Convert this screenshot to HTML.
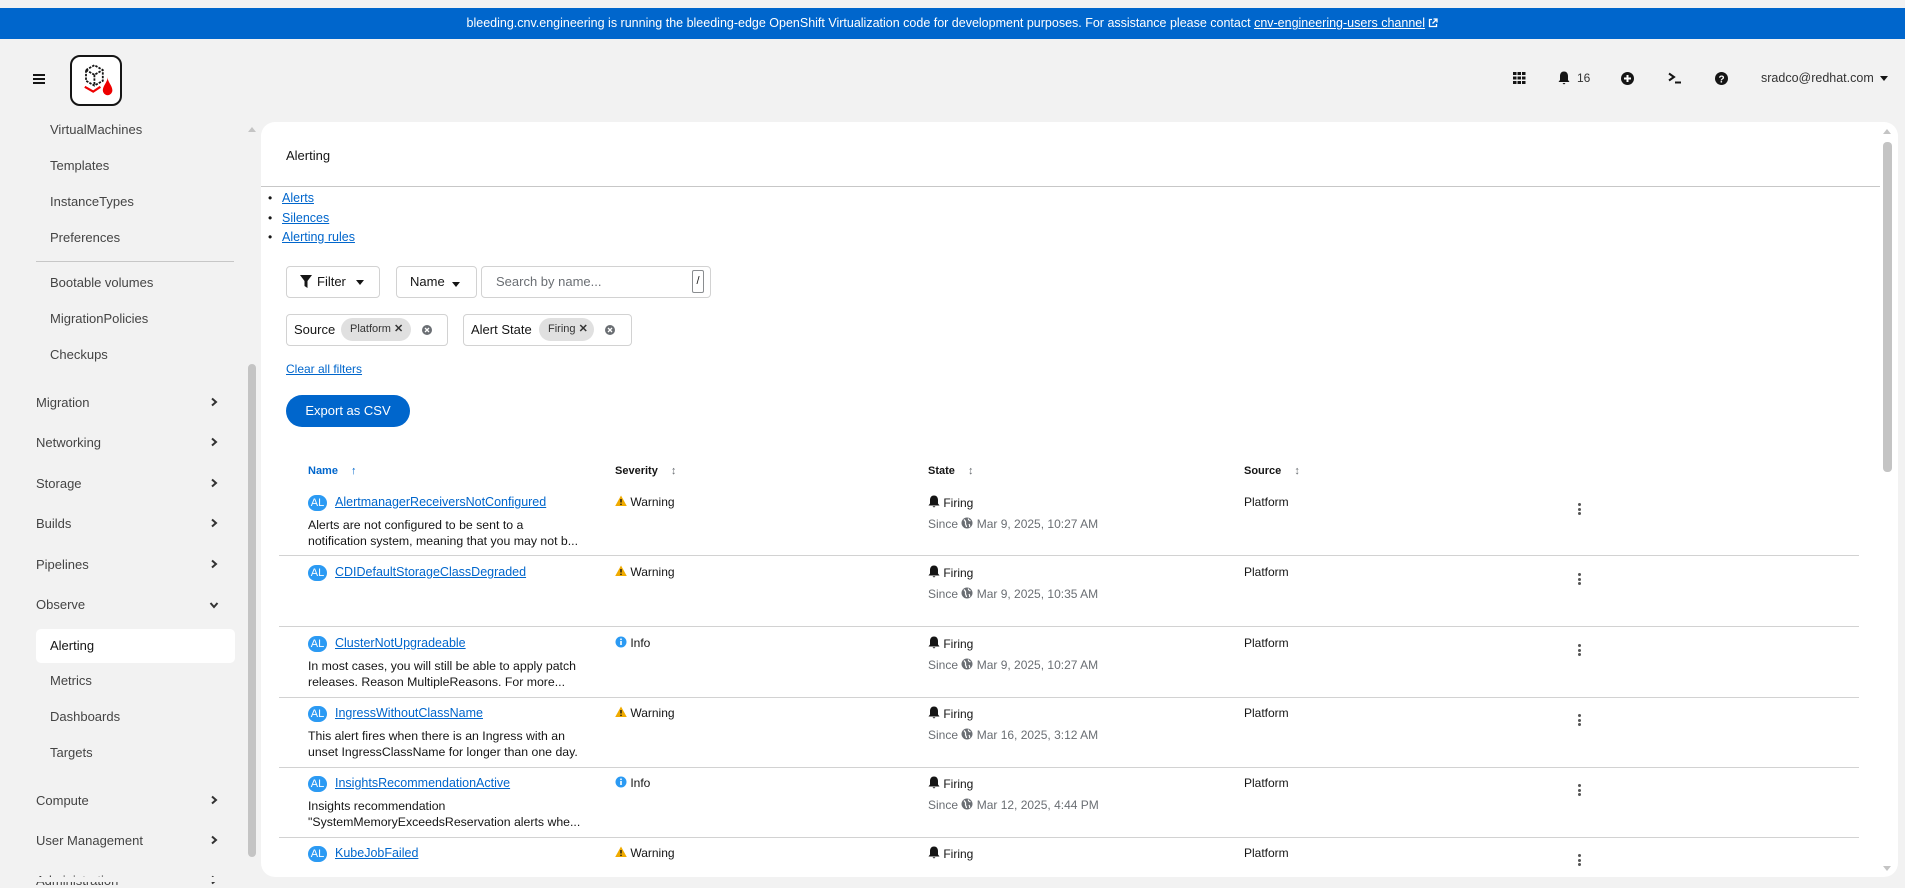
<!DOCTYPE html>
<html><head><meta charset="utf-8"><style>
*{box-sizing:border-box;margin:0;padding:0}
body{width:1905px;height:882px;overflow:hidden;background:#f2f2f2;font-family:"Liberation Sans",sans-serif;color:#151515;position:relative}
.a{position:absolute;white-space:nowrap}
.banner{left:0;top:8px;width:1905px;height:31px;background:#0066cc;color:#fff;font-size:12.5px;text-align:center;line-height:31px}
.banner u{color:#fff}
.side{font-size:13px;color:#444}
.sub{left:50px}
.main{left:36px}
.chev{left:210px}
.card{left:261px;top:122px;width:1637px;height:755px;background:#fff;border-radius:14px}
a{color:#0066cc;text-decoration:underline}
.box{border:1px solid #d2d2d2;border-radius:4px;background:#fff}
.btnt{font-size:13px;color:#151515}
.chip{background:#e0e0e0;border-radius:12px;font-size:11px;color:#333;line-height:23px;padding-left:9px}
.th{font-size:11px;font-weight:bold;color:#151515}
.sep{left:279px;width:1580px;height:1px;background:#d2d2d2}
.badge{width:19px;height:16px;border-radius:8px;background:#2b9af3;color:#fff;font-size:11px;line-height:16px;text-align:center}
.nm{font-size:12.5px;color:#0066cc;text-decoration:underline}
.desc{font-size:12.3px;color:#151515;line-height:16px}
.cell{font-size:12px}
.since{font-size:12px;color:#6a6e73}
.keb{width:3px}
.keb i{display:block;width:3px;height:3px;border-radius:2px;background:#555;margin-bottom:1.5px}
svg{vertical-align:-1px}
</style></head><body>
<div class="a banner">bleeding.cnv.engineering is running the bleeding-edge OpenShift Virtualization code for development purposes. For assistance please contact <u>cnv-engineering-users channel</u> <svg width="10" height="10" viewBox="0 0 10 10"><path d="M4 1.5H1.5V8.5H8.5V6M5.5 1H9V4.5M9 1L4.5 5.5" fill="none" stroke="#fff" stroke-width="1.3"/></svg></div>

<div class="a" style="left:33px;top:74px;width:12px;height:2px;background:#151515;box-shadow:0 4px 0 #151515,0 8px 0 #151515"></div>
<div class="a" style="left:70px;top:55px;width:52px;height:51px;border:2px solid #151515;border-radius:10px;background:#fff"></div>
<svg class="a" style="left:80px;top:64px" width="36" height="36" viewBox="0 0 30 30"><path d="M5 5 L12 1 L19 5 L19 14 L12 18 L5 14 Z M5 5 L12 9 L19 5 M12 9 L12 18" fill="none" stroke="#151515" stroke-width="1.5" stroke-dasharray="2 1"/><path d="M4 19 L11 23 L17 19" fill="none" stroke="#e00" stroke-width="1.8"/><path d="M23 11 C23 15 27 18 27 22 A4 4 0 0 1 19 22 C19 18 23 15 23 11Z" fill="#e00"/></svg>

<!-- top right icons -->
<svg class="a" style="left:1513px;top:72px" width="13" height="12"><g fill="#151515"><rect x="0" y="0" width="3.5" height="3"/><rect x="4.5" y="0" width="3.5" height="3"/><rect x="9" y="0" width="3.5" height="3"/><rect x="0" y="4.5" width="3.5" height="3"/><rect x="4.5" y="4.5" width="3.5" height="3"/><rect x="9" y="4.5" width="3.5" height="3"/><rect x="0" y="9" width="3.5" height="3"/><rect x="4.5" y="9" width="3.5" height="3"/><rect x="9" y="9" width="3.5" height="3"/></g></svg>
<svg class="a" style="left:1558px;top:71px" width="12" height="14" viewBox="0 0 12 14"><path d="M6 0.5 C3 0.5 2 3 2 5 L2 9 L0.5 11 L11.5 11 L10 9 L10 5 C10 3 9 0.5 6 0.5Z M4.5 12 L7.5 12 L6 13.5Z" fill="#151515"/></svg>
<div class="a" style="left:1577px;top:71px;font-size:12px;color:#333">16</div>
<svg class="a" style="left:1621px;top:72px" width="13" height="13"><circle cx="6.5" cy="6.5" r="6.5" fill="#151515"/><path d="M6.5 3v7M3 6.5h7" stroke="#fff" stroke-width="2"/></svg>
<svg class="a" style="left:1668px;top:72px" width="14" height="12"><path d="M1 1.5L6 5L1 8.5" fill="none" stroke="#151515" stroke-width="2"/><path d="M7 10.5H13" stroke="#151515" stroke-width="2"/></svg>
<svg class="a" style="left:1715px;top:72px" width="13" height="13"><circle cx="6.5" cy="6.5" r="6.5" fill="#151515"/><text x="6.5" y="10.5" font-size="10" font-weight="bold" fill="#fff" text-anchor="middle" font-family="Liberation Sans">?</text></svg>
<div class="a" style="left:1761px;top:71px;font-size:12.5px;color:#333">sradco@redhat.com</div>
<div class="a" style="left:1880px;top:76px;border-left:4px solid transparent;border-right:4px solid transparent;border-top:5px solid #151515"></div>

<!-- sidebar -->
<div class="a side sub" style="top:122px">VirtualMachines</div>
<div class="a side sub" style="top:158px">Templates</div>
<div class="a side sub" style="top:194px">InstanceTypes</div>
<div class="a side sub" style="top:230px">Preferences</div>
<div class="a" style="left:36px;top:261px;width:198px;height:1px;background:#c7c7c7"></div>
<div class="a side sub" style="top:275px">Bootable volumes</div>
<div class="a side sub" style="top:311px">MigrationPolicies</div>
<div class="a side sub" style="top:347px">Checkups</div>
<div class="a side main" style="top:395px">Migration</div><svg class="a chev" style="top:397px" width="8" height="10"><path d="M2 1.5L6 5L2 8.5" fill="none" stroke="#333" stroke-width="2"/></svg>
<div class="a side main" style="top:435px">Networking</div><svg class="a chev" style="top:437px" width="8" height="10"><path d="M2 1.5L6 5L2 8.5" fill="none" stroke="#333" stroke-width="2"/></svg>
<div class="a side main" style="top:476px">Storage</div><svg class="a chev" style="top:478px" width="8" height="10"><path d="M2 1.5L6 5L2 8.5" fill="none" stroke="#333" stroke-width="2"/></svg>
<div class="a side main" style="top:516px">Builds</div><svg class="a chev" style="top:518px" width="8" height="10"><path d="M2 1.5L6 5L2 8.5" fill="none" stroke="#333" stroke-width="2"/></svg>
<div class="a side main" style="top:557px">Pipelines</div><svg class="a chev" style="top:559px" width="8" height="10"><path d="M2 1.5L6 5L2 8.5" fill="none" stroke="#333" stroke-width="2"/></svg>
<div class="a side main" style="top:597px">Observe</div><svg class="a" style="left:209px;top:601px" width="10" height="8"><path d="M1.5 2L5 6L8.5 2" fill="none" stroke="#333" stroke-width="2"/></svg>
<div class="a" style="left:36px;top:629px;width:199px;height:34px;background:#fff;border-radius:5px"></div>
<div class="a side" style="left:50px;top:638px;color:#151515">Alerting</div>
<div class="a side sub" style="top:673px">Metrics</div>
<div class="a side sub" style="top:709px">Dashboards</div>
<div class="a side sub" style="top:745px">Targets</div>
<div class="a side main" style="top:793px">Compute</div><svg class="a chev" style="top:795px" width="8" height="10"><path d="M2 1.5L6 5L2 8.5" fill="none" stroke="#333" stroke-width="2"/></svg>
<div class="a side main" style="top:833px">User Management</div><svg class="a chev" style="top:835px" width="8" height="10"><path d="M2 1.5L6 5L2 8.5" fill="none" stroke="#333" stroke-width="2"/></svg>
<div class="a side main" style="top:873px">Administration</div><svg class="a chev" style="top:875px" width="8" height="10"><path d="M2 1.5L6 5L2 8.5" fill="none" stroke="#333" stroke-width="2"/></svg>
<div class="a" style="left:248px;top:364px;width:8px;height:493px;background:#c4c4c4;border-radius:4px"></div>
<div class="a" style="left:248px;top:127px;border-left:4px solid transparent;border-right:4px solid transparent;border-bottom:5px solid #c4c4c4"></div>

<!-- card -->
<div class="a card"></div>
<div class="a" style="left:1883px;top:142px;width:9px;height:330px;background:#c4c4c4;border-radius:4px"></div>
<div class="a" style="left:1883px;top:129px;border-left:4px solid transparent;border-right:4px solid transparent;border-bottom:5px solid #c4c4c4"></div>
<div class="a" style="left:1883px;top:866px;border-left:4px solid transparent;border-right:4px solid transparent;border-top:5px solid #c4c4c4"></div>
<div class="a" style="left:286px;top:148px;font-size:13px">Alerting</div>
<div class="a" style="left:261px;top:186px;width:1619px;height:1px;background:#c7c7c7"></div>
<div class="a" style="left:268px;top:189px;font-size:12px;line-height:19.5px">•<br>•<br>•</div>
<div class="a" style="left:282px;top:189px;font-size:12.5px;line-height:19.5px"><a>Alerts</a><br><a>Silences</a><br><a>Alerting rules</a></div>

<div class="a box" style="left:286px;top:266px;width:94px;height:32px"></div>
<svg class="a" style="left:300px;top:275px" width="12" height="13"><path d="M0 0H12L7.5 6V13L4.5 11V6Z" fill="#151515"/></svg>
<div class="a btnt" style="left:317px;top:274px">Filter</div>
<div class="a" style="left:356px;top:280px;border-left:4px solid transparent;border-right:4px solid transparent;border-top:5px solid #151515"></div>
<div class="a box" style="left:396px;top:266px;width:81px;height:32px"></div>
<div class="a btnt" style="left:410px;top:274px">Name</div>
<div class="a" style="left:452px;top:282px;border-left:4px solid transparent;border-right:4px solid transparent;border-top:5px solid #151515"></div>
<div class="a box" style="left:481px;top:266px;width:230px;height:32px"></div>
<div class="a" style="left:496px;top:274px;font-size:13px;color:#6a6e73">Search by name...</div>
<div class="a" style="left:692px;top:270px;width:12px;height:23px;border:1px solid #8a8d90;border-radius:2px;font-size:11px;text-align:center;line-height:21px">/</div>

<div class="a box" style="left:286px;top:314px;width:162px;height:32px"></div>
<div class="a btnt" style="left:294px;top:322px">Source</div>
<div class="a chip" style="left:341px;top:318px;width:70px">Platform <b>✕</b></div>
<svg class="a" style="left:422px;top:325px" width="10" height="10"><circle cx="5" cy="5" r="5" fill="#6a6e73"/><path d="M3 3l4 4M7 3l-4 4" stroke="#fff" stroke-width="1.3"/></svg>
<div class="a box" style="left:463px;top:314px;width:169px;height:32px"></div>
<div class="a btnt" style="left:471px;top:322px">Alert State</div>
<div class="a chip" style="left:539px;top:318px;width:55px">Firing <b>✕</b></div>
<svg class="a" style="left:605px;top:325px" width="10" height="10"><circle cx="5" cy="5" r="5" fill="#6a6e73"/><path d="M3 3l4 4M7 3l-4 4" stroke="#fff" stroke-width="1.3"/></svg>
<div class="a" style="left:286px;top:362px;font-size:12px"><a>Clear all filters</a></div>
<div class="a" style="left:286px;top:395px;width:124px;height:32px;border-radius:16px;background:#0066cc;color:#fff;font-size:13px;text-align:center;line-height:32px">Export as CSV</div>

<div class="a th" style="left:308px;top:465px;color:#0066cc">Name <span style="margin-left:10px">&#x2191;</span></div>
<div class="a th" style="left:615px;top:465px">Severity <span style="margin-left:10px;color:#6a6e73">&#x2195;</span></div>
<div class="a th" style="left:928px;top:465px">State <span style="margin-left:10px;color:#6a6e73">&#x2195;</span></div>
<div class="a th" style="left:1244px;top:465px">Source <span style="margin-left:10px;color:#6a6e73">&#x2195;</span></div>

<div class="a sep" style="top:555px"></div>
<div class="a sep" style="top:626px"></div>
<div class="a sep" style="top:697px"></div>
<div class="a sep" style="top:767px"></div>
<div class="a sep" style="top:837px"></div>

<svg width="0" height="0" style="position:absolute"><defs>
<g id="warn"><path d="M6 0.5L11.8 11H0.2Z" fill="#f0ab00"/><path d="M6 4V7.5" stroke="#151515" stroke-width="1.4"/><circle cx="6" cy="9.3" r="0.8" fill="#151515"/></g>
<g id="info"><circle cx="6" cy="6" r="5.5" fill="#2b9af3"/><rect x="5.2" y="5" width="1.6" height="4" fill="#fff"/><circle cx="6" cy="3.3" r="0.9" fill="#fff"/></g>
<g id="bell"><path d="M6 0.5 C3 0.5 2 3 2 5 L2 8.5 L0.5 10.5 L11.5 10.5 L10 8.5 L10 5 C10 3 9 0.5 6 0.5Z M4.5 11.2 L7.5 11.2 L6 12.5Z" fill="#151515"/></g>
<g id="globe"><circle cx="6" cy="6" r="5.5" fill="#6a6e73"/><path d="M3 2.5C4 4 5 4 4.5 6C4 7.5 5.5 8 5.5 10M7.5 1.5C7 3 8.5 3.5 9.5 4M8 7C8.5 8 9 8.5 8.5 10" fill="none" stroke="#fff" stroke-width="1.2"/></g>
</defs></svg>

<div class="a badge" style="left:308px;top:495px">AL</div><div class="a nm" style="left:335px;top:495px">AlertmanagerReceiversNotConfigured</div>
<div class="a desc" style="left:308px;top:517px">Alerts are not configured to be sent to a<br>notification system, meaning that you may not b...</div>
<div class="a cell" style="left:615px;top:495px"><svg width="12" height="12"><use href="#warn"/></svg> Warning</div>
<div class="a cell" style="left:928px;top:495px"><svg width="12" height="13"><use href="#bell"/></svg> Firing</div>
<div class="a since" style="left:928px;top:517px">Since <svg width="12" height="12"><use href="#globe"/></svg> Mar 9, 2025, 10:27 AM</div>
<div class="a cell" style="left:1244px;top:495px">Platform</div>
<div class="a keb" style="left:1578px;top:503px"><i></i><i></i><i></i></div>

<div class="a badge" style="left:308px;top:565px">AL</div><div class="a nm" style="left:335px;top:565px">CDIDefaultStorageClassDegraded</div>
<div class="a cell" style="left:615px;top:565px"><svg width="12" height="12"><use href="#warn"/></svg> Warning</div>
<div class="a cell" style="left:928px;top:565px"><svg width="12" height="13"><use href="#bell"/></svg> Firing</div>
<div class="a since" style="left:928px;top:587px">Since <svg width="12" height="12"><use href="#globe"/></svg> Mar 9, 2025, 10:35 AM</div>
<div class="a cell" style="left:1244px;top:565px">Platform</div>
<div class="a keb" style="left:1578px;top:573px"><i></i><i></i><i></i></div>

<div class="a badge" style="left:308px;top:636px">AL</div><div class="a nm" style="left:335px;top:636px">ClusterNotUpgradeable</div>
<div class="a desc" style="left:308px;top:658px">In most cases, you will still be able to apply patch<br>releases. Reason MultipleReasons. For more...</div>
<div class="a cell" style="left:615px;top:636px"><svg width="12" height="12"><use href="#info"/></svg> Info</div>
<div class="a cell" style="left:928px;top:636px"><svg width="12" height="13"><use href="#bell"/></svg> Firing</div>
<div class="a since" style="left:928px;top:658px">Since <svg width="12" height="12"><use href="#globe"/></svg> Mar 9, 2025, 10:27 AM</div>
<div class="a cell" style="left:1244px;top:636px">Platform</div>
<div class="a keb" style="left:1578px;top:644px"><i></i><i></i><i></i></div>

<div class="a badge" style="left:308px;top:706px">AL</div><div class="a nm" style="left:335px;top:706px">IngressWithoutClassName</div>
<div class="a desc" style="left:308px;top:728px">This alert fires when there is an Ingress with an<br>unset IngressClassName for longer than one day.</div>
<div class="a cell" style="left:615px;top:706px"><svg width="12" height="12"><use href="#warn"/></svg> Warning</div>
<div class="a cell" style="left:928px;top:706px"><svg width="12" height="13"><use href="#bell"/></svg> Firing</div>
<div class="a since" style="left:928px;top:728px">Since <svg width="12" height="12"><use href="#globe"/></svg> Mar 16, 2025, 3:12 AM</div>
<div class="a cell" style="left:1244px;top:706px">Platform</div>
<div class="a keb" style="left:1578px;top:714px"><i></i><i></i><i></i></div>

<div class="a badge" style="left:308px;top:776px">AL</div><div class="a nm" style="left:335px;top:776px">InsightsRecommendationActive</div>
<div class="a desc" style="left:308px;top:798px">Insights recommendation<br>"SystemMemoryExceedsReservation alerts whe...</div>
<div class="a cell" style="left:615px;top:776px"><svg width="12" height="12"><use href="#info"/></svg> Info</div>
<div class="a cell" style="left:928px;top:776px"><svg width="12" height="13"><use href="#bell"/></svg> Firing</div>
<div class="a since" style="left:928px;top:798px">Since <svg width="12" height="12"><use href="#globe"/></svg> Mar 12, 2025, 4:44 PM</div>
<div class="a cell" style="left:1244px;top:776px">Platform</div>
<div class="a keb" style="left:1578px;top:784px"><i></i><i></i><i></i></div>

<div class="a badge" style="left:308px;top:846px">AL</div><div class="a nm" style="left:335px;top:846px">KubeJobFailed</div>
<div class="a cell" style="left:615px;top:846px"><svg width="12" height="12"><use href="#warn"/></svg> Warning</div>
<div class="a cell" style="left:928px;top:846px"><svg width="12" height="13"><use href="#bell"/></svg> Firing</div>
<div class="a cell" style="left:1244px;top:846px">Platform</div>
<div class="a keb" style="left:1578px;top:854px"><i></i><i></i><i></i></div>
<div class="a" style="left:0;top:877px;width:1905px;height:5px;background:#f2f2f2"></div>
</body></html>
